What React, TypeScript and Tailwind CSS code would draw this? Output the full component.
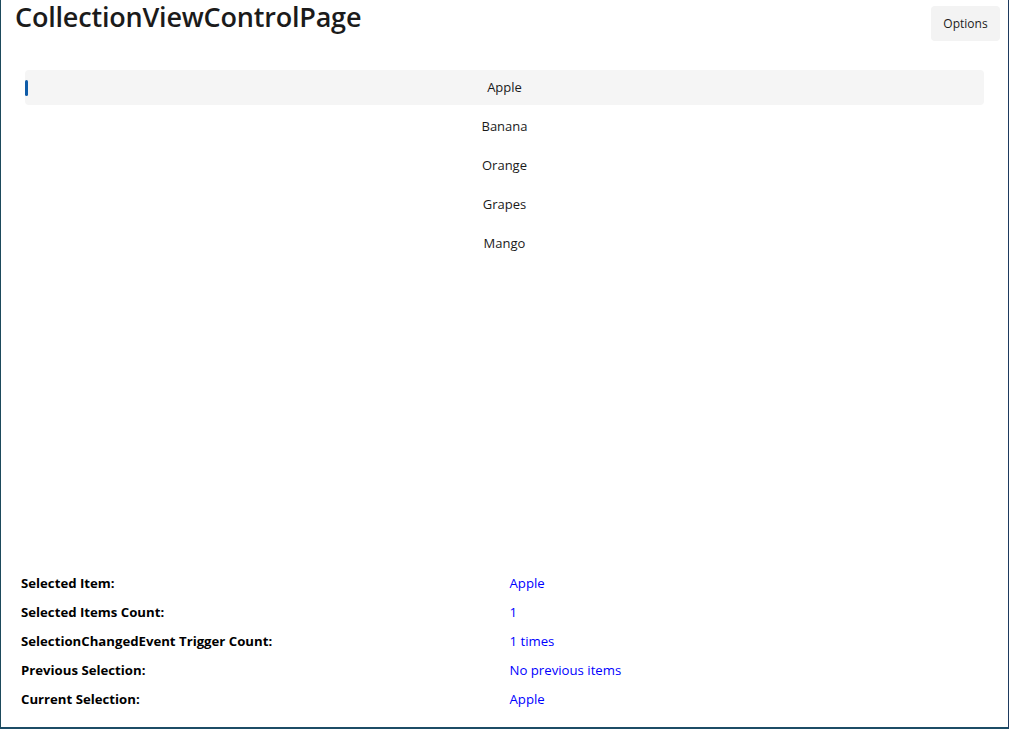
import React, { useState } from "react"

const fruits = ["Apple", "Banana", "Orange", "Grapes", "Mango"]

const font = { fontFamily: '"Segoe UI", "Open Sans", "Noto Sans", sans-serif' }

function App() {
  const [selected, setSelected] = useState("Apple")

  const rows: [string, string][] = [
    ["Selected Item:", selected],
    ["Selected Items Count:", "1"],
    ["SelectionChangedEvent Trigger Count:", "1 times"],
    ["Previous Selection:", "No previous items"],
    ["Current Selection:", selected],
  ]

  return (
    <div className="w-[1010px] h-[729px] bg-white pr-[1px]" style={font}>
      <div className="h-full flex flex-col border-l border-l-[#1d4a5c] border-r border-r-[#1e3a5f] border-b-2 border-b-[#1c4c66] text-[#1a1a1a]">
        {/* header */}
        <div className="flex items-start justify-between pl-[14px] pr-[8px] h-[68px]">
          <h1 className="text-[27px] leading-[34px] font-semibold tracking-[-0.2px] text-[#1b1b1b]">
            CollectionViewControlPage
          </h1>
          <button className="mt-[6px] w-[69px] h-[35px] rounded-[4px] bg-[#f3f3f3] text-[12px] text-[#1b1b1b]">
            Options
          </button>
        </div>

        {/* list */}
        <div className="px-[24px] flex flex-col">
          {fruits.map((f) => (
            <div key={f} className="h-[39px] py-[2px]">
              <div
                onClick={() => setSelected(f)}
                className={`relative h-[35px] rounded-[4px] flex items-center justify-center text-[13px] ${
                  selected === f ? "bg-[#f5f5f5]" : ""
                }`}
              >
                {selected === f && (
                  <span className="absolute left-0 top-[10px] h-[16px] w-[3px] rounded-full bg-[#0f5ca8]" />
                )}
                {f}
              </div>
            </div>
          ))}
        </div>

        <div className="flex-1" />

        {/* status */}
        <div className="grid grid-cols-2 pl-[20px] pr-[10px] pb-[13px] text-[13.2px]">
          {rows.map(([label, value]) => (
            <React.Fragment key={label}>
              <div className="h-[29px] flex items-center font-bold text-black">{label}</div>
              <div className="h-[29px] flex items-center text-[#0000ff]">{value}</div>
            </React.Fragment>
          ))}
        </div>
      </div>
    </div>
  )
}

export default App
